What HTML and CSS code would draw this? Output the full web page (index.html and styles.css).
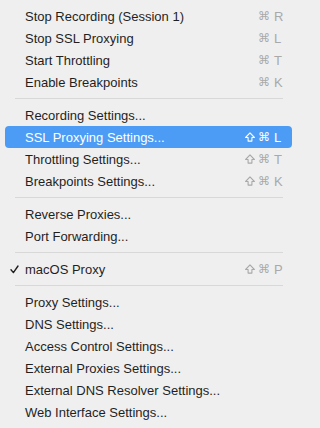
FILE: index.html
```html
<!DOCTYPE html>
<html>
<head>
<meta charset="utf-8">
<link rel="stylesheet" href="styles.css">
</head>
<body>
<div class="menu">
  <div class="item"><span class="check"></span><span class="label">Stop Recording (Session 1)</span><span class="keys"><span class="mod">⌘</span><span class="key">R</span></span></div>
  <div class="item"><span class="check"></span><span class="label">Stop SSL Proxying</span><span class="keys"><span class="mod">⌘</span><span class="key">L</span></span></div>
  <div class="item"><span class="check"></span><span class="label">Start Throttling</span><span class="keys"><span class="mod">⌘</span><span class="key">T</span></span></div>
  <div class="item"><span class="check"></span><span class="label">Enable Breakpoints</span><span class="keys"><span class="mod">⌘</span><span class="key">K</span></span></div>
  <div class="sep"></div>
  <div class="item"><span class="check"></span><span class="label">Recording Settings...</span></div>
  <div class="item active"><span class="check"></span><span class="label">SSL Proxying Settings...</span><span class="keys"><span class="mod shiftbox"><svg class="shift" viewBox="0 0 10 10"><path d="M5 0.9 L9.4 5.5 H6.9 V9.1 H3.1 V5.5 H0.6 Z"/></svg></span><span class="mod">⌘</span><span class="key">L</span></span></div>
  <div class="item"><span class="check"></span><span class="label">Throttling Settings...</span><span class="keys"><span class="mod shiftbox"><svg class="shift" viewBox="0 0 10 10"><path d="M5 0.9 L9.4 5.5 H6.9 V9.1 H3.1 V5.5 H0.6 Z"/></svg></span><span class="mod">⌘</span><span class="key">T</span></span></div>
  <div class="item"><span class="check"></span><span class="label">Breakpoints Settings...</span><span class="keys"><span class="mod shiftbox"><svg class="shift" viewBox="0 0 10 10"><path d="M5 0.9 L9.4 5.5 H6.9 V9.1 H3.1 V5.5 H0.6 Z"/></svg></span><span class="mod">⌘</span><span class="key">K</span></span></div>
  <div class="sep"></div>
  <div class="item"><span class="check"></span><span class="label">Reverse Proxies...</span></div>
  <div class="item"><span class="check"></span><span class="label">Port Forwarding...</span></div>
  <div class="sep"></div>
  <div class="item"><span class="check"><svg width="9" height="9" viewBox="0 0 9 9"><path d="M1 4.8 L3.4 7.6 L8 1" fill="none" stroke="#1f1f1f" stroke-width="1.4" stroke-linecap="round" stroke-linejoin="round"/></svg></span><span class="label">macOS Proxy</span><span class="keys"><span class="mod shiftbox"><svg class="shift" viewBox="0 0 10 10"><path d="M5 0.9 L9.4 5.5 H6.9 V9.1 H3.1 V5.5 H0.6 Z"/></svg></span><span class="mod">⌘</span><span class="key">P</span></span></div>
  <div class="sep"></div>
  <div class="item"><span class="check"></span><span class="label">Proxy Settings...</span></div>
  <div class="item"><span class="check"></span><span class="label">DNS Settings...</span></div>
  <div class="item"><span class="check"></span><span class="label">Access Control Settings...</span></div>
  <div class="item"><span class="check"></span><span class="label">External Proxies Settings...</span></div>
  <div class="item"><span class="check"></span><span class="label">External DNS Resolver Settings...</span></div>
  <div class="item"><span class="check"></span><span class="label">Web Interface Settings...</span></div>
</div>
</body>
</html>
```

FILE: styles.css
```css
html, body {
  margin: 0;
  padding: 0;
  background: #efefef;
}

.menu {
  width: 297px;
  height: 428px;
  box-sizing: border-box;
  padding: 5px 0;
  background: #efefef;
  border-radius: 6px;
  font-family: "Liberation Sans", Arial, sans-serif;
  font-size: 13px;
  color: #1f1f1f;
  overflow: hidden;
}

.item {
  display: flex;
  align-items: center;
  height: 22px;
  margin: 0 5px;
  padding: 0 8px 0 5px;
  border-radius: 4px;
  white-space: nowrap;
}

.item.active {
  background: #4c9cf5;
  color: #ffffff;
}

.check {
  width: 15px;
  flex: none;
  display: flex;
  align-items: center;
  padding-top: 1px;
}

.label {
  flex: none;
}

.keys {
  margin-left: auto;
  display: flex;
  align-items: center;
  gap: 5px;
  color: #a9a9a9;
}

.item.active .keys {
  color: #ffffff;
}

.mod {
  font-family: "DejaVu Sans", sans-serif;
  font-size: 12px;
  width: 8px;
  flex: none;
  display: flex;
  justify-content: center;
  align-items: center;
}

.mod.shiftbox {
  width: 10px;
}

.shift {
  width: 10px;
  height: 10px;
  flex: none;
  fill: none;
  stroke: currentColor;
  stroke-width: 1.1;
  stroke-linejoin: round;
}

.key {
  width: 10px;
  font-size: 13px;
  margin-left: 1px;
}

.sep {
  height: 11px;
  display: flex;
  align-items: center;
}

.sep::after {
  content: "";
  flex: 1;
  height: 1px;
  margin: 0 14px 0 15px;
  background: #d8d8d8;
}
```
